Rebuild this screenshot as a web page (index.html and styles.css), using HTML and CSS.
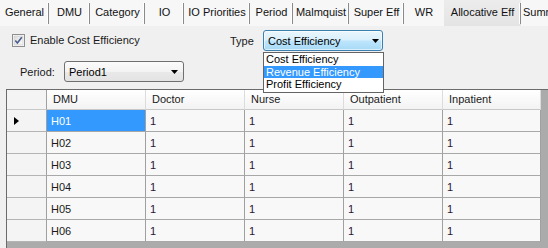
FILE: index.html
```html
<!DOCTYPE html>
<html>
<head>
<meta charset="utf-8">
<link rel="stylesheet" href="styles.css">
</head>
<body>
<nav class="tabs">
  <div class="tab sep">General</div>
  <div class="tab sep">DMU</div>
  <div class="tab sep">Category</div>
  <div class="tab sep">IO</div>
  <div class="tab sep">IO Priorities</div>
  <div class="tab sep">Period</div>
  <div class="tab sep">Malmquist</div>
  <div class="tab sep">Super Eff</div>
  <div class="tab">WR</div>
  <div class="tab sep active">Allocative Eff</div>
  <div class="tab last">Summary</div>
</nav>
<main class="panel">
  <div class="row row-top">
    <label class="check-group">
      <svg class="checkbox" width="13" height="13" viewBox="0 0 13 13">
        <defs>
          <linearGradient id="cb" x1="0" y1="0" x2="1" y2="1">
            <stop offset="0" stop-color="#dcdcdc"/>
            <stop offset="1" stop-color="#fbfbfb"/>
          </linearGradient>
        </defs>
        <rect x="0.5" y="0.5" width="12" height="12" fill="#fff" stroke="#8e8f8f"/>
        <rect x="2" y="2" width="9" height="9" fill="url(#cb)" stroke="#c4c4c4" stroke-width="0.6"/>
        <path d="M3.3 6.4 L5.4 8.9 L9.8 3.2" fill="none" stroke="#4a5d8c" stroke-width="1.6"/>
      </svg>
      <span>Enable Cost Efficiency</span>
    </label>
    <span class="field-label type-label">Type</span>
    <div class="combo combo-open">
      <span class="combo-text">Cost Efficiency</span>
      <svg class="arrow" width="7" height="4" viewBox="0 0 7 4"><path d="M0 0 H7 L3.5 4 Z" fill="#000"/></svg>
      <ul class="dropdown">
        <li>Cost Efficiency</li>
        <li class="hl">Revenue Efficiency</li>
        <li>Profit Efficiency</li>
      </ul>
    </div>
  </div>
  <div class="row row-period">
    <span class="field-label period-label">Period:</span>
    <div class="combo">
      <span class="combo-text">Period1</span>
      <svg class="arrow" width="7" height="4" viewBox="0 0 7 4"><path d="M0 0 H7 L3.5 4 Z" fill="#000"/></svg>
    </div>
  </div>
  <section class="grid">
    <div class="table">
      <div class="hcell corner"></div>
      <div class="hcell">DMU</div>
      <div class="hcell">Doctor</div>
      <div class="hcell">Nurse</div>
      <div class="hcell">Outpatient</div>
      <div class="hcell">Inpatient</div>

      <div class="rhead"><svg width="5" height="8" viewBox="0 0 5 8"><path d="M0 0 L5 4 L0 8 Z" fill="#000"/></svg></div>
      <div class="cell selected">H01</div><div class="cell num">1</div><div class="cell num">1</div><div class="cell num">1</div><div class="cell num">1</div>

      <div class="rhead"></div>
      <div class="cell">H02</div><div class="cell num">1</div><div class="cell num">1</div><div class="cell num">1</div><div class="cell num">1</div>

      <div class="rhead"></div>
      <div class="cell">H03</div><div class="cell num">1</div><div class="cell num">1</div><div class="cell num">1</div><div class="cell num">1</div>

      <div class="rhead"></div>
      <div class="cell">H04</div><div class="cell num">1</div><div class="cell num">1</div><div class="cell num">1</div><div class="cell num">1</div>

      <div class="rhead"></div>
      <div class="cell">H05</div><div class="cell num">1</div><div class="cell num">1</div><div class="cell num">1</div><div class="cell num">1</div>

      <div class="rhead"></div>
      <div class="cell">H06</div><div class="cell num">1</div><div class="cell num">1</div><div class="cell num">1</div><div class="cell num">1</div>
    </div>
  </section>
</main>
</body>
</html>
```
FILE: styles.css
```css
* { box-sizing: border-box; }
html, body {
  margin: 0;
  padding: 0;
}
body {
  width: 548px;
  height: 248px;
  overflow: hidden;
  background: #f0f0f0;
  font-family: "Liberation Sans", Arial, sans-serif;
  font-size: 11px;
  color: #1a1a1a;
}

/* Tabs */
.tabs {
  display: grid;
  grid-template-columns: 49px 41px 55px 39px 66px 43px 56px 55px 40px 77px 1fr;
  height: 26px;
  background: #f7f7f7;
}
.tab {
  position: relative;
  display: flex;
  align-items: center;
  justify-content: center;
  white-space: nowrap;
  overflow: hidden;
  padding-bottom: 3px;
  color: #111;
}
.tab.sep::after {
  content: "";
  position: absolute;
  right: 0;
  top: 3px;
  bottom: 2px;
  width: 1px;
  background: #8a8a8a;
  box-shadow: -1px 0 0 #ffffff;
}
.tab.active {
  background: linear-gradient(#ececec, #e4e4e4);
}
.tab.last {
  justify-content: flex-start;
  padding-left: 2px;
}

/* Panel */
.panel {
  padding-top: 4px;
}
.row {
  display: flex;
  align-items: center;
  height: 21px;
}
.row-top {
  padding-left: 12px;
}
.row-period {
  margin-top: 10px;
  padding-left: 20px;
}
.check-group {
  display: flex;
  align-items: center;
  gap: 5px;
  width: 218px;
  padding-bottom: 1px;
}
.checkbox { display: block; flex: none; }
.field-label { color: #1a1a1a; }
.type-label { width: 33px; }
.period-label { width: 44px; }

.combo {
  position: relative;
  display: flex;
  align-items: center;
  justify-content: space-between;
  width: 120px;
  height: 21px;
  padding: 0 4px 0 4px;
  border: 1px solid #707070;
  border-radius: 3px;
  background: linear-gradient(#f2f2f2 0%, #ebebeb 48%, #dddddd 52%, #cfcfcf 100%);
  color: #000;
}
.row-period .combo {
  padding-right: 5px;
  background: linear-gradient(#fbfbfb 0%, #f3f3f3 50%, #e9e9e9 51%, #e3e3e3 100%);
}
.combo-open {
  border-color: #3c7fb1;
  background: linear-gradient(#eaf6fd 0%, #d9f0fc 48%, #bee6fd 52%, #a7d9f5 100%);
  box-shadow: inset 0 0 0 1px rgba(255,255,255,0.6);
  padding-right: 3px;
}
.combo-text { white-space: nowrap; }
.arrow { display: block; flex: none; }

.dropdown {
  position: absolute;
  top: 21px;
  left: -1px;
  width: 121px;
  margin: 0;
  padding: 0 0 1px 0;
  list-style: none;
  background: #fff;
  border: 1px solid #646464;
  z-index: 5;
}
.dropdown li {
  height: 12.5px;
  line-height: 12px;
  padding-left: 2px;
  color: #000;
  white-space: nowrap;
}
.dropdown li.hl {
  background: #3399ff;
  color: #fff;
}

/* Grid */
.grid {
  margin-top: 7px;
  margin-left: 6px;
  height: 160px;
  border-left: 1px solid #6b6b6b;
  border-top: 1px solid #6b6b6b;
  background: #ababab;
}
.table {
  display: grid;
  grid-template-columns: 40px 99px 99px 99px 99px 98px;
  grid-template-rows: 20px repeat(6, 22px);
  width: 534px;
}
.hcell {
  display: flex;
  align-items: center;
  padding-left: 6px;
  padding-bottom: 1px;
  background: linear-gradient(#ffffff, #f3f3f3);
  border-right: 1px solid #dcdcdc;
  border-bottom: 1px solid #c8c8c8;
  color: #1a1a1a;
}
.hcell.corner {
  border-right: 1px solid #a0a0a0;
  background: #f4f4f4;
}
.rhead {
  display: flex;
  align-items: center;
  padding-left: 7px;
  background: #f4f4f4;
  border-right: 1px solid #a0a0a0;
  border-bottom: 1px solid #b4b4b4;
}
.rhead svg { display: block; }
.cell {
  display: flex;
  align-items: center;
  padding-left: 4px;
  background: #f8f8f8;
  border-right: 1px solid #a0a0a0;
  border-bottom: 1px solid #a8a8a8;
  color: #1a1a1a;
  white-space: nowrap;
}
.cell.num { color: #2a1430; }
.cell.selected {
  background: #3399ff;
  color: #fff;
}
```
